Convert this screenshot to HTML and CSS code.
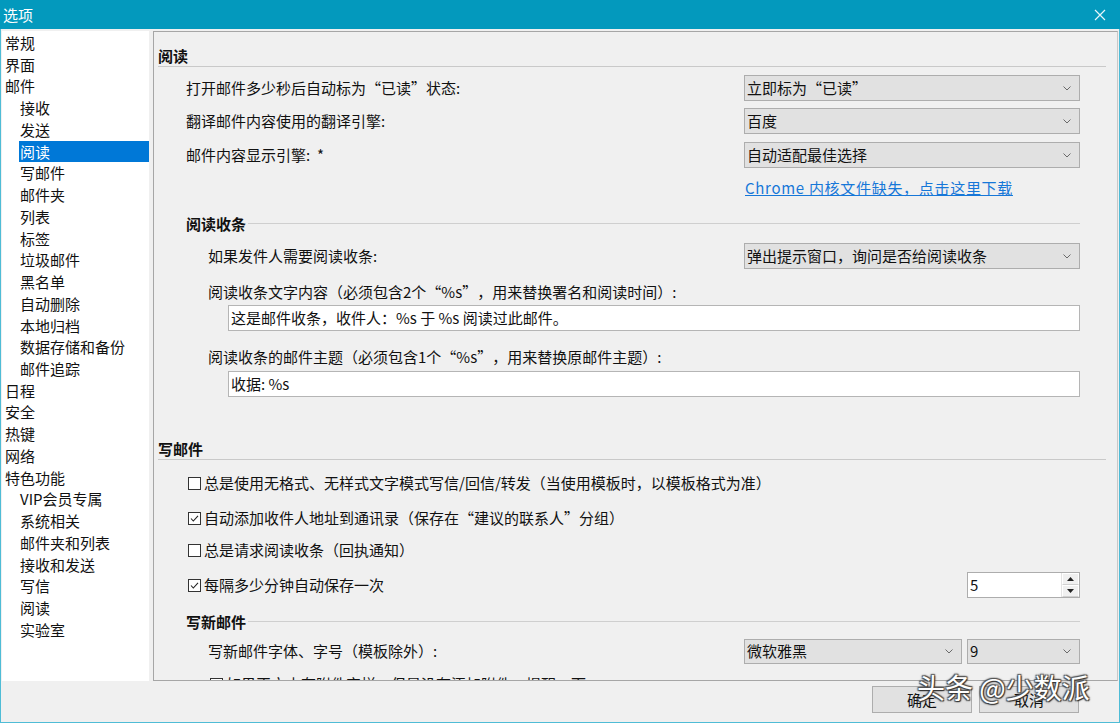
FILE: index.html
```html
<!DOCTYPE html>
<html lang="zh-CN">
<head>
<meta charset="utf-8">
<title>选项</title>
<link rel="stylesheet" href="styles.css">
</head>
<body>
<div class="window">
  <div class="titlebar">
    <span class="title">选项</span>
    <svg class="close" width="12" height="12" viewBox="0 0 12 12"><path d="M1 1L11 11M11 1L1 11" stroke="#e8f6fa" stroke-width="1.2" fill="none"/></svg>
  </div>
  <div class="content">
    <ul class="tree">
      <li class="top">常规</li>
      <li class="top">界面</li>
      <li class="top">邮件</li>
      <li class="child">接收</li>
      <li class="child">发送</li>
      <li class="child selected">阅读</li>
      <li class="child">写邮件</li>
      <li class="child">邮件夹</li>
      <li class="child">列表</li>
      <li class="child">标签</li>
      <li class="child">垃圾邮件</li>
      <li class="child">黑名单</li>
      <li class="child">自动删除</li>
      <li class="child">本地归档</li>
      <li class="child">数据存储和备份</li>
      <li class="child">邮件追踪</li>
      <li class="top">日程</li>
      <li class="top">安全</li>
      <li class="top">热键</li>
      <li class="top">网络</li>
      <li class="top">特色功能</li>
      <li class="child">VIP会员专属</li>
      <li class="child">系统相关</li>
      <li class="child">邮件夹和列表</li>
      <li class="child">接收和发送</li>
      <li class="child">写信</li>
      <li class="child">阅读</li>
      <li class="child">实验室</li>
    </ul>
    <div class="panel">
      <div class="panel-inner">
        <div class="section-head s-read">阅读</div>

        <div class="row r1">
          <span class="label">打开邮件多少秒后自动标为<span class="ql">“</span>已读<span class="qr">”</span>状态:</span>
          <div class="combo"><span>立即标为<span class="ql">“</span>已读<span class="qr">”</span></span><svg class="chev" width="8" height="5" viewBox="0 0 8 5"><path d="M0.5 0.5L4 4L7.5 0.5" stroke="#6a6a6a" fill="none"/></svg></div>
        </div>
        <div class="row r2">
          <span class="label">翻译邮件内容使用的翻译引擎:</span>
          <div class="combo"><span>百度</span><svg class="chev" width="8" height="5" viewBox="0 0 8 5"><path d="M0.5 0.5L4 4L7.5 0.5" stroke="#6a6a6a" fill="none"/></svg></div>
        </div>
        <div class="row r3">
          <span class="label">邮件内容显示引擎:  *</span>
          <div class="combo"><span>自动适配最佳选择</span><svg class="chev" width="8" height="5" viewBox="0 0 8 5"><path d="M0.5 0.5L4 4L7.5 0.5" stroke="#6a6a6a" fill="none"/></svg></div>
        </div>
        <div class="row linkrow">
          <span class="label"></span>
          <div class="linkcell"><a class="link" href="#">Chrome 内核文件缺失，点击这里下载</a></div>
        </div>

        <div class="sub-head sh-receipt"><span>阅读收条</span></div>
        <div class="row deep r-receipt">
          <span class="label">如果发件人需要阅读收条:</span>
          <div class="combo"><span>弹出提示窗口，询问是否给阅读收条</span><svg class="chev" width="8" height="5" viewBox="0 0 8 5"><path d="M0.5 0.5L4 4L7.5 0.5" stroke="#6a6a6a" fill="none"/></svg></div>
        </div>
        <div class="text-label tl1">阅读收条文字内容（必须包含2个<span class="ql">“</span>%s<span class="qr">”</span>，用来替换署名和阅读时间）:</div>
        <div class="textbox tb1">这是邮件收条，收件人：%s 于 %s 阅读过此邮件。</div>
        <div class="text-label tl2">阅读收条的邮件主题（必须包含1个<span class="ql">“</span>%s<span class="qr">”</span>，用来替换原邮件主题）:</div>
        <div class="textbox tb2">收据: %s</div>

        <div class="section-head s-write">写邮件</div>
        <div class="check c1"><span class="box"></span><span>总是使用无格式、无样式文字模式写信/回信/转发（当使用模板时，以模板格式为准）</span></div>
        <div class="check c2"><span class="box"><svg width="11" height="11" viewBox="0 0 11 11"><path d="M2 5.5L4.3 8L9 2.8" stroke="#222" stroke-width="1.1" fill="none"/></svg></span><span>自动添加收件人地址到通讯录（保存在<span class="ql">“</span>建议的联系人<span class="qr">”</span>分组）</span></div>
        <div class="check c3"><span class="box"></span><span>总是请求阅读收条（回执通知）</span></div>
        <div class="check-row c4">
          <div class="check"><span class="box"><svg width="11" height="11" viewBox="0 0 11 11"><path d="M2 5.5L4.3 8L9 2.8" stroke="#222" stroke-width="1.1" fill="none"/></svg></span><span>每隔多少分钟自动保存一次</span></div>
          <div class="spinner">
            <span class="spin-val">5</span>
            <div class="spin-btns">
              <div class="spin-btn"><svg width="7" height="4" viewBox="0 0 7 4"><path d="M0 4L3.5 0L7 4Z" fill="#222"/></svg></div>
              <div class="spin-btn"><svg width="7" height="4" viewBox="0 0 7 4"><path d="M0 0L3.5 4L7 0Z" fill="#222"/></svg></div>
            </div>
          </div>
        </div>

        <div class="sub-head sh-new"><span>写新邮件</span></div>
        <div class="row deep r-font">
          <span class="label">写新邮件字体、字号（模板除外）:</span>
          <div class="font-combos">
            <div class="combo wide"><span>微软雅黑</span><svg class="chev" width="8" height="5" viewBox="0 0 8 5"><path d="M0.5 0.5L4 4L7.5 0.5" stroke="#6a6a6a" fill="none"/></svg></div>
            <div class="combo narrow"><span>9</span><svg class="chev" width="8" height="5" viewBox="0 0 8 5"><path d="M0.5 0.5L4 4L7.5 0.5" stroke="#6a6a6a" fill="none"/></svg></div>
          </div>
        </div>
        <div class="check deepcheck c5"><span class="box"></span><span>如果正文中有附件字样，但是没有添加附件，提醒一下</span></div>
      </div>
    </div>
  </div>
  <div class="footer">
    <button class="btn">确定</button>
    <button class="btn">取消</button>
    <div class="watermark">头条 @少数派</div>
  </div>
</div>
</body>
</html>
```

FILE: styles.css
```css
* { box-sizing: border-box; }
html, body { margin: 0; padding: 0; }
body {
  width: 1120px;
  height: 723px;
  overflow: hidden;
  background: #f0f0f0;
  font-family: "Noto Sans CJK SC", "Microsoft YaHei", "Noto Sans", sans-serif;
  font-size: 15px;
  color: #111;
  text-spacing-trim: space-all;
}
.window {
  width: 1120px;
  height: 723px;
  border-left: 1px solid #4fbcd6;
  border-right: 1px solid #4fbcd6;
  border-bottom: 1px solid #4fbcd6;
  background: #f0f0f0;
  display: flex;
  flex-direction: column;
  position: relative;
}
.titlebar {
  height: 29px;
  margin: 0 -1px;
  background: #0399bd;
  color: #fff;
  display: flex;
  align-items: center;
  justify-content: space-between;
  padding: 0 14px 0 3px;
  flex: none;
}
.title { font-size: 15px; line-height: 29px; }
.close { display: block; }

.ql, .qr {
  display: inline-block;
  width: 15px;
}
.ql { text-align: right; }
.qr { text-align: left; }

.content {
  display: flex;
  gap: 4px;
  padding: 2px 1px 0 1px;
  height: 652px;
  flex: none;
}
.tree {
  list-style: none;
  margin: 0;
  padding: 1px 0 0 0;
  width: 147px;
  height: 650px;
  background: #fff;
  flex: none;
}
.tree li {
  height: 21.74px;
  line-height: 21.74px;
  white-space: nowrap;
}
.tree .top { padding-left: 3px; }
.tree .child { margin-left: 17px; padding-left: 1px; }
.tree .selected { background: #0078d7; color: #fff; }

.panel {
  width: 965px;
  height: 650px;
  border: 1px solid #a6a6a6;
  border-right-color: #c8c8c8;
  overflow: hidden;
  flex: none;
}
.panel-inner {
  padding: 14px 11px 0 4px;
}
.section-head {
  height: 21px;
  line-height: 20px;
  font-weight: bold;
  border-bottom: 1px solid #c9c9c9;
}
.s-write { margin-top: 42px; }

.row {
  display: flex;
  align-items: center;
  justify-content: space-between;
  height: 26px;
  padding: 0 26px 0 28px;
}
.row.deep { padding-left: 50px; }
.r1 { margin-top: 8px; }
.r2 { margin-top: 7px; }
.r3 { margin-top: 8px; }
.linkrow { margin-top: 8px; height: 24px; }
.label { white-space: pre; line-height: 20px; }
.combo {
  width: 336px;
  height: 26px;
  background: #e1e1e1;
  border: 1px solid #adadad;
  display: flex;
  align-items: center;
  justify-content: space-between;
  padding: 0 8px 0 2px;
  line-height: 24px;
  white-space: nowrap;
}
.linkcell { width: 336px; padding-left: 1px; line-height: 24px; }
.link { color: #1677d8; text-decoration: underline; letter-spacing: 0.7px; }

.sub-head {
  display: flex;
  align-items: center;
  height: 20px;
  padding: 0 26px 0 28px;
  font-weight: bold;
  line-height: 20px;
}
.sub-head::after {
  content: "";
  flex: 1;
  height: 1px;
  background: #cfcfcf;
  margin-left: 2px;
  margin-top: -1px;
}
.sh-receipt { margin-top: 14px; }
.r-receipt { margin-top: 9px; }
.text-label { padding-left: 50px; height: 20px; line-height: 20px; white-space: nowrap; }
.tl1 { margin-top: 13px; }
.tl2 { margin-top: 16px; }
.textbox {
  margin-left: 70px;
  width: 852px;
  height: 26px;
  background: #fff;
  border: 1px solid #b5b5b5;
  padding-left: 2px;
  line-height: 24px;
  white-space: nowrap;
}
.tb1 { margin-top: 3px; }
.tb2 { margin-top: 4px; }

.check {
  display: flex;
  align-items: center;
  height: 20px;
  padding-left: 30px;
  line-height: 20px;
  white-space: nowrap;
}
.check .box {
  width: 13px;
  height: 13px;
  border: 1px solid #333;
  background: #fff;
  margin-right: 3px;
  display: flex;
  align-items: center;
  justify-content: center;
  flex: none;
}
.check .box svg { display: block; }
.c1 { margin-top: 13px; }
.c2 { margin-top: 15px; }
.c3 { margin-top: 12px; }
.check-row {
  margin-top: 12px;
  height: 26px;
  display: flex;
  align-items: center;
  justify-content: space-between;
  padding-right: 26px;
}
.check-row .check { padding-top: 0; }
.spinner {
  width: 113px;
  height: 26px;
  background: #fff;
  border: 1px solid #adadad;
  display: flex;
  justify-content: space-between;
}
.spin-val { padding-left: 2px; line-height: 24px; }
.spin-btns {
  width: 18px;
  display: flex;
  flex-direction: column;
  border-left: 1px solid #e3e3e3;
}
.spin-btn {
  flex: 1;
  background: #f0f0f0;
  border: 1px solid #fff;
  border-bottom-color: #d0d0d0;
  display: flex;
  align-items: center;
  justify-content: center;
}
.spin-btn svg { display: block; }

.sh-new { margin-top: 14px; }
.r-font { margin-top: 6px; }
.font-combos { display: flex; gap: 5px; }
.combo.wide { width: 218px; height: 25px; }
.combo.narrow { width: 113px; height: 25px; }
.deepcheck { margin-top: 10px; padding-left: 52px; }

.footer {
  position: relative;
  flex: 1;
  display: flex;
  justify-content: flex-end;
  align-items: flex-start;
  gap: 7px;
  padding: 5px 40px 0 0;
}
.btn {
  width: 100px;
  height: 27px;
  background: #e1e1e1;
  border: 1px solid #adadad;
  font-family: inherit;
  font-size: 15px;
  color: #111;
  padding: 0;
  line-height: 25px;
}
.watermark {
  position: absolute;
  left: 916px;
  top: -12px;
  font-size: 28px;
  line-height: 36px;
  color: #fff;
  white-space: nowrap;
  text-shadow: 1px 1px 1px #333, -1px -1px 1px #555, 1px -1px 1px #555, -1px 1px 1px #555, 0 0 3px rgba(0,0,0,0.6);
}
```
